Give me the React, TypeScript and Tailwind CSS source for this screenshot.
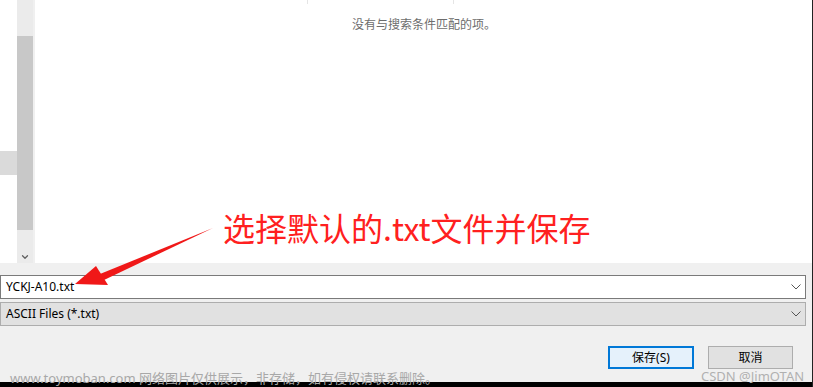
import { ChevronDown } from "lucide-react";

const ui = { fontFamily: '"Noto Sans", "Noto Sans CJK SC", sans-serif' };

function Chevron() {
  return (
    <svg width="10" height="6" viewBox="0 0 10 6" className="shrink-0">
      <path d="M0.5 0.5 L5 5 L9.5 0.5" fill="none" stroke="#555" strokeWidth="1" />
    </svg>
  );
}

export default function App() {
  return (
    <div className="relative w-[813px] h-[387px] overflow-hidden bg-[#f0f0f0]" style={ui}>
      {/* file list area */}
      <div className="flex h-[263px] bg-white">
        <div className="w-[17px] flex flex-col">
          <div className="mt-[151px] h-[24px] bg-[#dadada]" />
        </div>
        <div className="w-[16px] bg-[#ebebeb] flex flex-col items-center">
          <div className="mt-[36px] h-[194px] w-full bg-[#c8c8c8]" />
          <div className="mt-[22px] text-[#606060]">
            <ChevronDown size={10} strokeWidth={3} />
          </div>
        </div>
        <div className="w-[2px] bg-[#f0f0f0]" />
        <div className="flex-1 flex flex-col">
          <div className="flex h-[4px]">
            <div className="ml-[272px] w-px bg-[#e5e5e5]" />
            <div className="ml-[145px] w-px bg-[#e5e5e5]" />
          </div>
          <div className="mt-[13px] pl-[317px] text-[12px] leading-[16px] text-[#6d6d6d]">
            没有与搜索条件匹配的项。
          </div>
        </div>
      </div>

      {/* bottom controls */}
      <div className="flex flex-col pt-[12px] pr-[7px]">
        <div className="h-[24px] border border-[#7a7a7a] bg-white flex items-center pl-[5px] pr-[4px]">
          <span className="flex-1 text-[12px] text-black">YCKJ-A10.txt</span>
          <Chevron />
        </div>
        <div className="mt-[3px] h-[24px] border border-[#adadad] bg-[#e1e1e1] flex items-center pl-[5px] pr-[4px]">
          <span className="flex-1 text-[12px] text-black">ASCII Files (*.txt)</span>
          <Chevron />
        </div>
        <div className="mt-[20px] flex justify-end gap-[14px] pr-[13px]">
          <button className="w-[86px] h-[23px] border-2 border-[#0078d7] bg-[#e5f1fb] text-[12px] text-black">
            保存(S)
          </button>
          <button className="w-[85px] h-[23px] border border-[#adadad] bg-[#e1e1e1] text-[12px] text-black">
            取消
          </button>
        </div>
      </div>

      {/* black bottom strip */}
      <div className="absolute left-0 right-0 bottom-0 h-[5px] bg-black" />
      <div className="absolute right-0 top-0 bottom-0 w-px bg-[#222]" />

      {/* annotation */}
      <div
        className="absolute left-[223px] top-[207px] text-[32px] leading-[40px] text-[#ff2020]"
        style={{ fontFamily: '"Noto Sans CJK SC", "Noto Sans", sans-serif' }}
      >
        选择默认的.txt文件并保存
      </div>
      <svg className="absolute left-0 top-0" width="813" height="387" viewBox="0 0 813 387">
        <path d="M213 228 L100 274 L104 280 Z" fill="#f01818" />
        <path d="M75 284 L96 266 L108 285 Z" fill="#f01818" />
      </svg>

      {/* watermarks */}
      <div className="absolute left-[10px] top-[370px] text-[13px] leading-[16px] text-[#a8a8a8] whitespace-nowrap">
        www.toymoban.com 网络图片仅供展示，非存储，如有侵权请联系删除。
      </div>
      <div className="absolute left-[701px] top-[369px] text-[13px] leading-[14px] text-[#b0b0b0] whitespace-nowrap">
        CSDN @JimOTAN
      </div>
    </div>
  );
}
